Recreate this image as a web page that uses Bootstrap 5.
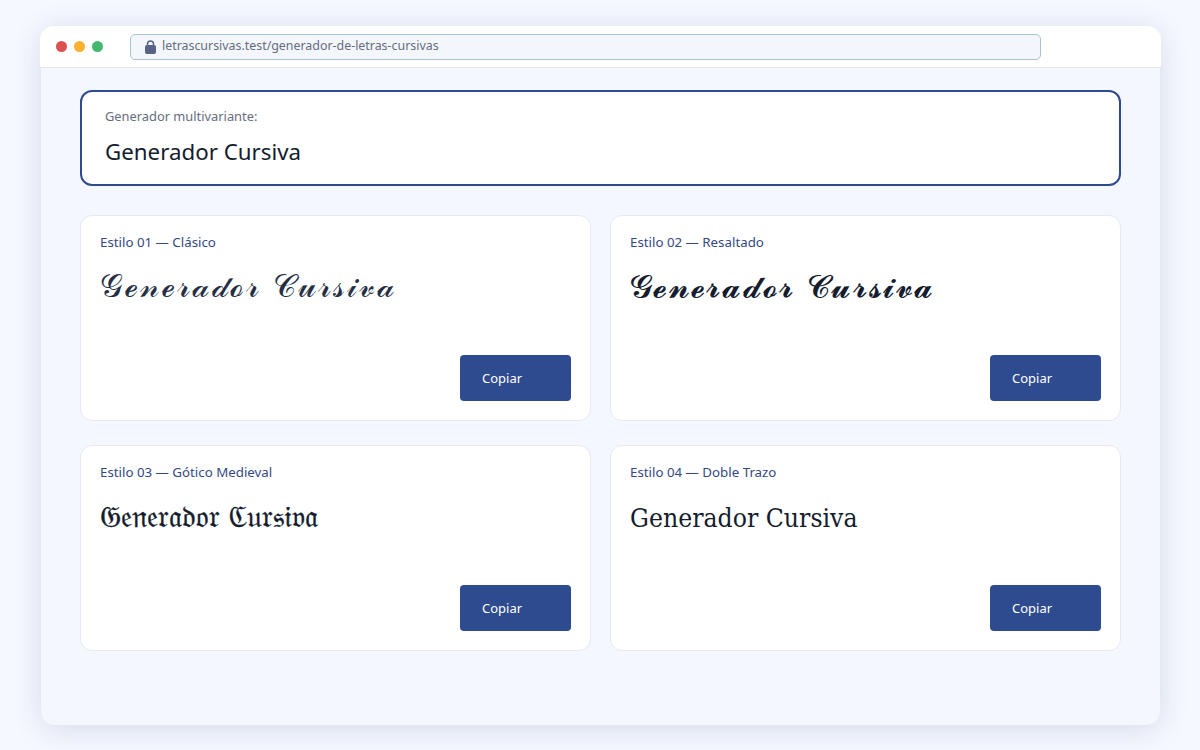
<!doctype html>
<html lang="es"><head><meta charset="utf-8"><title>Generador</title>
<link href="https://cdn.jsdelivr.net/npm/bootstrap@5.3.0/dist/css/bootstrap.min.css" rel="stylesheet">
<style>
html,body{height:100%}
body{background:#f5f8ff;font-family:"Noto Sans",sans-serif;color:#141c2e;overflow:hidden}
.stage{padding:26px 40px 25px 41px;height:750px}
.win{height:699px;background:#f4f7fe;border-radius:14px;box-shadow:0 4px 30px rgba(30,42,90,.14)}
.bar{height:42px;margin:0 -1px;background:#fff;border-bottom:1px solid #e4e9f1;border-radius:14px 14px 0 0;padding-left:16px}
.dots{gap:7px}
.dot{width:11px;height:11px;border-radius:50%}
.addr{margin-left:27px;width:911px;height:26px;background:#f3f7fc;border:1px solid #a8c4d4;border-radius:5px;padding-left:14px;font-size:12.4px;color:#666d80;gap:6px}
.body-wrap{padding:22px 39px 0}
.hero{height:96px;border:2px solid #2f4b8f;border-radius:12px;background:#fff;padding:14px 23px}
.hero-l{font-size:12.85px;color:#666d80;line-height:20px}
.hero-v{font-size:22.3px;line-height:30px;margin-top:11px;color:#141c2e}
.cards{display:grid;grid-template-columns:511px 511px;column-gap:19px;row-gap:24px;margin-top:29px}
.tile{height:206px;border:1px solid #e6e9f2;border-radius:12px;padding:17px 19px 19px}
.tile-l{font-size:13.3px;line-height:18px;color:#34497f}
.tile-v{line-height:34px;margin-top:18px;color:#141c2e;white-space:nowrap}
.v1{font-family:"DejaVu Serif",serif;font-size:32px;letter-spacing:2px;color:#262e44}
.v2{font-family:"DejaVu Serif",serif;font-size:32px;letter-spacing:1.3px}
.v3{font-family:"DejaVu Serif",serif;font-size:29.6px;margin-top:19px;-webkit-text-stroke:.3px #141c2e}
.v4{font-family:"DejaVu Serif Condensed",serif;font-size:26.3px;margin-top:20px}
.copy{width:111px;height:46px;background:#2f4b8f;border:0;border-radius:4px;color:#fff;font-size:13px;text-align:left;padding:2px 22px 0}
.copy:hover{background:#2f4b8f;color:#fff}
</style></head><body>
<div class="stage"><div class="win">
<div class="bar d-flex align-items-center">
<div class="d-flex dots"><span class="dot" style="background:#dc5050"></span><span class="dot" style="background:#f9b02e"></span><span class="dot" style="background:#45b86d"></span></div>
<div class="addr d-flex align-items-center">
<svg width="11" height="14" viewBox="0 0 11 14"><path d="M2.5 6V4a3 3 0 0 1 6 0v2" fill="none" stroke="#5a6385" stroke-width="1.5"/><rect x="0" y="5" width="11" height="9" rx="2" fill="#5a6385"/></svg>
<span>letrascursivas.test/generador-de-letras-cursivas</span></div>
</div>
<div class="body-wrap">
<div class="hero"><div class="hero-l">Generador multivariante:</div><div class="hero-v">Generador Cursiva</div></div>
<div class="cards">
<div class="card tile"><div class="tile-l">Estilo 01 — Clásico</div><div class="tile-v v1">𝒢ℯ𝓃ℯ𝓇𝒶𝒹ℴ𝓇 𝒞𝓊𝓇𝓈𝒾𝓋𝒶</div><div class="mt-auto d-flex justify-content-end"><button class="btn copy">Copiar</button></div></div>
<div class="card tile"><div class="tile-l">Estilo 02 — Resaltado</div><div class="tile-v v2">𝓖𝓮𝓷𝓮𝓻𝓪𝓭𝓸𝓻 𝓒𝓾𝓻𝓼𝓲𝓿𝓪</div><div class="mt-auto d-flex justify-content-end"><button class="btn copy">Copiar</button></div></div>
<div class="card tile"><div class="tile-l">Estilo 03 — Gótico Medieval</div><div class="tile-v v3">𝔊𝔢𝔫𝔢𝔯𝔞𝔡𝔬𝔯 ℭ𝔲𝔯𝔰𝔦𝔳𝔞</div><div class="mt-auto d-flex justify-content-end"><button class="btn copy">Copiar</button></div></div>
<div class="card tile"><div class="tile-l">Estilo 04 — Doble Trazo</div><div class="tile-v v4">Generador Cursiva</div><div class="mt-auto d-flex justify-content-end"><button class="btn copy">Copiar</button></div></div>
</div></div></div></div>
<script src="https://cdn.jsdelivr.net/npm/bootstrap@5.3.0/dist/js/bootstrap.bundle.min.js"></script>
</body></html>
